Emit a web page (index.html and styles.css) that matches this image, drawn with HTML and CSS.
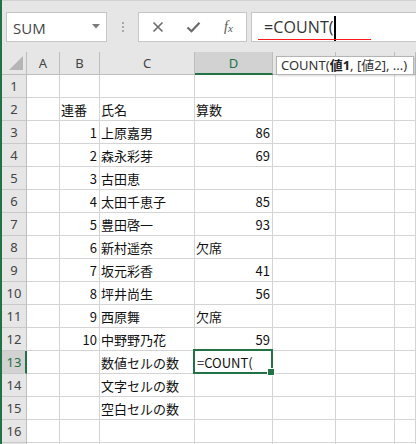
FILE: index.html
```html
<!DOCTYPE html>
<html lang="ja">
<head>
<meta charset="utf-8">
<link rel="stylesheet" href="styles.css">
</head>
<body>
<div class="app">
  <div class="fbar">
    <div class="namebox">
      <span class="nb-text">SUM</span>
      <svg class="nb-arrow" width="8" height="5" viewBox="0 0 8 5"><path d="M0 0H8L4 4.5Z" fill="#7a7a7a"/></svg>
    </div>
    <div class="grip"><i></i><i></i><i></i></div>
    <div class="btns">
      <svg class="ico" width="14" height="14" viewBox="0 0 14 14"><path d="M2.5 2.5L11.5 11.5M11.5 2.5L2.5 11.5" stroke="#6b6b6b" stroke-width="1.6" fill="none"/></svg>
      <svg class="ico" width="15" height="14" viewBox="0 0 15 14"><path d="M1.5 7.5L5.5 11.2L13.5 2.8" stroke="#6b6b6b" stroke-width="2.2" fill="none"/></svg>
      <span class="fx">f<sub>x</sub></span>
    </div>
    <div class="formula">
      <span class="ftext">=COUNT(</span><span class="caret"></span>
      <span class="redline"></span>
    </div>
  </div>
  <div class="sheet">
    <div class="hd corner"><svg width="24" height="22" viewBox="0 0 24 22"><path d="M21 4V18H7Z" fill="#b5b5b5"/></svg></div>
    <div class="hd">A</div><div class="hd">B</div><div class="hd">C</div><div class="hd act-col">D</div><div class="hd"></div><div class="hd"></div><div class="hd"></div>

    <div class="rh">1</div><div class="c"></div><div class="c"></div><div class="c"></div><div class="c"></div><div class="c"></div><div class="c"></div><div class="c"></div>
    <div class="rh">2</div><div class="c"></div><div class="c">連番</div><div class="c">氏名</div><div class="c">算数</div><div class="c"></div><div class="c"></div><div class="c"></div>
    <div class="rh">3</div><div class="c"></div><div class="c n">1</div><div class="c">上原嘉男</div><div class="c n">86</div><div class="c"></div><div class="c"></div><div class="c"></div>
    <div class="rh">4</div><div class="c"></div><div class="c n">2</div><div class="c">森永彩芽</div><div class="c n">69</div><div class="c"></div><div class="c"></div><div class="c"></div>
    <div class="rh">5</div><div class="c"></div><div class="c n">3</div><div class="c">古田恵</div><div class="c"></div><div class="c"></div><div class="c"></div><div class="c"></div>
    <div class="rh">6</div><div class="c"></div><div class="c n">4</div><div class="c">太田千恵子</div><div class="c n">85</div><div class="c"></div><div class="c"></div><div class="c"></div>
    <div class="rh">7</div><div class="c"></div><div class="c n">5</div><div class="c">豊田啓一</div><div class="c n">93</div><div class="c"></div><div class="c"></div><div class="c"></div>
    <div class="rh">8</div><div class="c"></div><div class="c n">6</div><div class="c">新村遥奈</div><div class="c">欠席</div><div class="c"></div><div class="c"></div><div class="c"></div>
    <div class="rh">9</div><div class="c"></div><div class="c n">7</div><div class="c">坂元彩香</div><div class="c n">41</div><div class="c"></div><div class="c"></div><div class="c"></div>
    <div class="rh">10</div><div class="c"></div><div class="c n">8</div><div class="c">坪井尚生</div><div class="c n">56</div><div class="c"></div><div class="c"></div><div class="c"></div>
    <div class="rh">11</div><div class="c"></div><div class="c n">9</div><div class="c">西原舞</div><div class="c">欠席</div><div class="c"></div><div class="c"></div><div class="c"></div>
    <div class="rh">12</div><div class="c"></div><div class="c n">10</div><div class="c">中野野乃花</div><div class="c n">59</div><div class="c"></div><div class="c"></div><div class="c"></div>
    <div class="rh act-row">13</div><div class="c"></div><div class="c"></div><div class="c">数値セルの数</div><div class="c sel">=COUNT(</div><div class="c"></div><div class="c"></div><div class="c"></div>
    <div class="rh">14</div><div class="c"></div><div class="c"></div><div class="c">文字セルの数</div><div class="c"></div><div class="c"></div><div class="c"></div><div class="c"></div>
    <div class="rh">15</div><div class="c"></div><div class="c"></div><div class="c">空白セルの数</div><div class="c"></div><div class="c"></div><div class="c"></div><div class="c"></div>
    <div class="rh">16</div><div class="c"></div><div class="c"></div><div class="c"></div><div class="c"></div><div class="c"></div><div class="c"></div><div class="c"></div>
    <div class="rh"></div><div class="c"></div><div class="c"></div><div class="c"></div><div class="c"></div><div class="c"></div><div class="c"></div><div class="c"></div>

    <div class="tip">COUNT(<b>値1</b>, [値2], ...)</div>
  </div>
</div>
</body>
</html>
```

FILE: styles.css
```css
* { box-sizing: border-box; }
html, body { margin: 0; padding: 0; }
body {
  width: 416px;
  height: 444px;
  overflow: hidden;
  background: #e6e6e6;
  font-family: "Noto Sans CJK JP", "Noto Sans", sans-serif;
}
.app {
  width: 416px;
  height: 444px;
  overflow: hidden;
  border-left: 2px solid #217346;
}
.fbar {
  height: 52px;
  display: flex;
  align-items: flex-start;
  padding: 12px 0 0 4px;
  border-top: 1px solid #d2d2d2;
}
.namebox {
  width: 101px;
  height: 30px;
  margin-top: -1px;
  background: #fff;
  border: 1px solid #c6c6c6;
  display: flex;
  align-items: center;
  justify-content: space-between;
  padding: 0 6px 0 6px;
}
.nb-text {
  font-family: "Open Sans", sans-serif;
  font-size: 15px;
  color: #474747;
  padding-top: 1px;
}
.nb-arrow { margin-top: -1px; }
.grip {
  width: 31px;
  height: 30px;
  margin-top: -1px;
  display: flex;
  flex-direction: column;
  align-items: center;
  justify-content: center;
  gap: 2px;
}
.grip i {
  display: block;
  width: 2px;
  height: 2px;
  background: #a8a8a8;
}
.btns {
  width: 109px;
  height: 30px;
  margin-top: -1px;
  background: #fff;
  border: 1px solid #c6c6c6;
  display: flex;
  align-items: center;
  padding-left: 12px;
}
.btns .ico:nth-child(2) { margin-left: 21px; }
.fx {
  margin-left: 23px;
  font-family: "Liberation Serif", serif;
  font-style: italic;
  font-size: 14px;
  color: #555;
  line-height: 1;
}
.fx sub { font-size: 11px; vertical-align: -1px; }
.formula {
  position: relative;
  flex: 1;
  margin-left: 4px;
  margin-right: -2px;
  margin-top: -1px;
  height: 30px;
  background: #fff;
  border: 1px solid #c6c6c6;
  display: flex;
  align-items: center;
  padding-left: 12px;
}
.ftext {
  font-family: "Open Sans", sans-serif;
  font-size: 16px;
  color: #333;
  letter-spacing: 0.1px;
}
.caret {
  display: block;
  width: 2px;
  height: 25px;
  margin-top: 3px;
  background: #000;
}
.redline {
  position: absolute;
  left: 6px;
  top: 26px;
  width: 113px;
  height: 1px;
  background: #ff1a1a;
}
.sheet {
  position: relative;
  display: grid;
  grid-template-columns: 25px 33px 40px 95px 78px 63px 59px 1fr;
  grid-auto-rows: 23px;
  font-size: 13px;
}
.hd {
  background: #e6e6e6;
  border-right: 1px solid #bdbdbd;
  border-bottom: 1px solid #bdbdbd;
  color: #444;
  text-align: center;
  line-height: 23px;
  font-family: "Noto Sans", sans-serif;
  font-size: 13px;
}
.hd.corner { padding: 0; line-height: 0; }
.hd.act-col {
  background: #d2d2d2;
  color: #217346;
  border-bottom: 2px solid #217346;
}
.rh {
  background: #e6e6e6;
  border-right: 1px solid #bdbdbd;
  border-bottom: 1px solid #c9c9c9;
  color: #444;
  text-align: center;
  line-height: 22px;
  font-family: "Noto Sans", sans-serif;
  font-size: 13px;
}
.rh.act-row {
  background: #d2d2d2;
  color: #217346;
  border-right: 2px solid #217346;
  padding-left: 1px;
}
.c {
  background: #fff;
  border-right: 1px solid #d4d4d4;
  border-bottom: 1px solid #d4d4d4;
  line-height: 22px;
  padding: 1px 2px 0 1px;
  white-space: nowrap;
  color: #111;
}
.c.n { text-align: right; padding-right: 2px; }
.c.sel {
  position: relative;
  z-index: 2;
  overflow: visible;
  padding-left: 2px;
}
.c.sel::after {
  content: "";
  position: absolute;
  left: -2px;
  top: -2px;
  right: -1px;
  bottom: -1px;
  border: 2px solid #217346;
}
.c.sel::before {
  content: "";
  position: absolute;
  right: -3px;
  bottom: -3px;
  width: 6px;
  height: 6px;
  background: #217346;
  border: 1px solid #fff;
  z-index: 3;
}
.tip {
  position: absolute;
  left: 274px;
  top: 4px;
  height: 19px;
  width: 138px;
  background: #fff;
  border: 1px solid #b4b4b4;
  box-shadow: 1px 1px 2px rgba(0,0,0,0.15);
  font-family: "Noto Sans", "Noto Sans CJK JP", sans-serif;
  font-size: 13px;
  line-height: 17px;
  padding-left: 4px;
  color: #333;
  white-space: nowrap;
  overflow: hidden;
}
.tip b { font-weight: 700; color: #222; }
```
